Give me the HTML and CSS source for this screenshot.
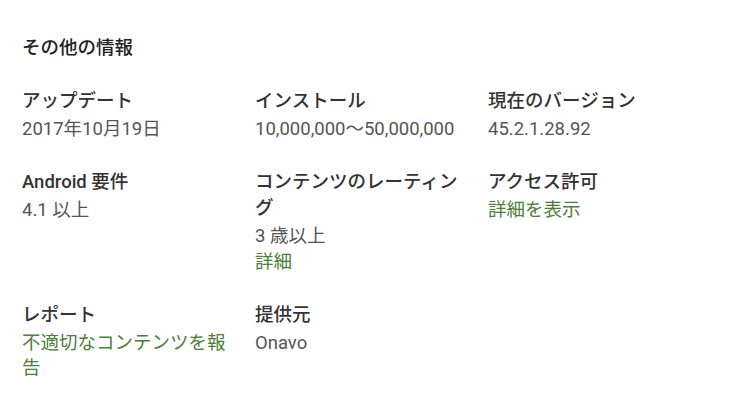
FILE: index.html
```html
<!DOCTYPE html>
<html lang="ja">
<head>
    <meta charset="UTF-8">
    <title>その他の情報</title>
    <link rel="stylesheet" href="styles.css">
</head>
<body>

<div class="details">
    <h2 class="details-title">その他の情報</h2>
    <div class="details-grid">
        <div class="item">
            <div class="label">アップデート</div>
            <div class="value">2017年10月19日</div>
        </div>
        <div class="item">
            <div class="label">インストール</div>
            <div class="value">10,000,000～50,000,000</div>
        </div>
        <div class="item">
            <div class="label">現在のバージョン</div>
            <div class="value">45.2.1.28.92</div>
        </div>
        <div class="item">
            <div class="label">Android 要件</div>
            <div class="value">4.1 以上</div>
        </div>
        <div class="item">
            <div class="label">コンテンツのレーティング</div>
            <div class="value">3 歳以上</div>
            <div class="value more"><a href="#" class="link">詳細</a></div>
        </div>
        <div class="item">
            <div class="label">アクセス許可</div>
            <div class="value"><a href="#" class="link">詳細を表示</a></div>
        </div>
        <div class="item">
            <div class="label">レポート</div>
            <div class="value"><a href="#" class="link">不適切なコンテンツを報告</a></div>
        </div>
        <div class="item">
            <div class="label">提供元</div>
            <div class="value">Onavo</div>
        </div>
    </div>
</div>

</body>
</html>
```

FILE: styles.css
```css
body {
    margin: 0;
    background: #fff;
    font-family: Roboto, "Noto Sans CJK JP", sans-serif;
}
.details {
    padding: 35px 22px 0 22px;
}
.details-title {
    margin: 0 0 27px 0;
    font-size: 18.5px;
    font-weight: 500;
    line-height: 26px;
    color: #212121;
}
.details-grid {
    display: grid;
    grid-template-columns: 233px 233px 233px;
    row-gap: 27px;
}
.item {
    padding-right: 20px;
}
.label {
    font-size: 18.5px;
    font-weight: 500;
    line-height: 26px;
    color: #333;
}
.value {
    margin-top: 3px;
    font-size: 18.5px;
    line-height: 25px;
    color: #555;
}
.value.more {
    margin-top: 1px;
}
.link {
    color: #4a803a;
    text-decoration: none;
}
```
